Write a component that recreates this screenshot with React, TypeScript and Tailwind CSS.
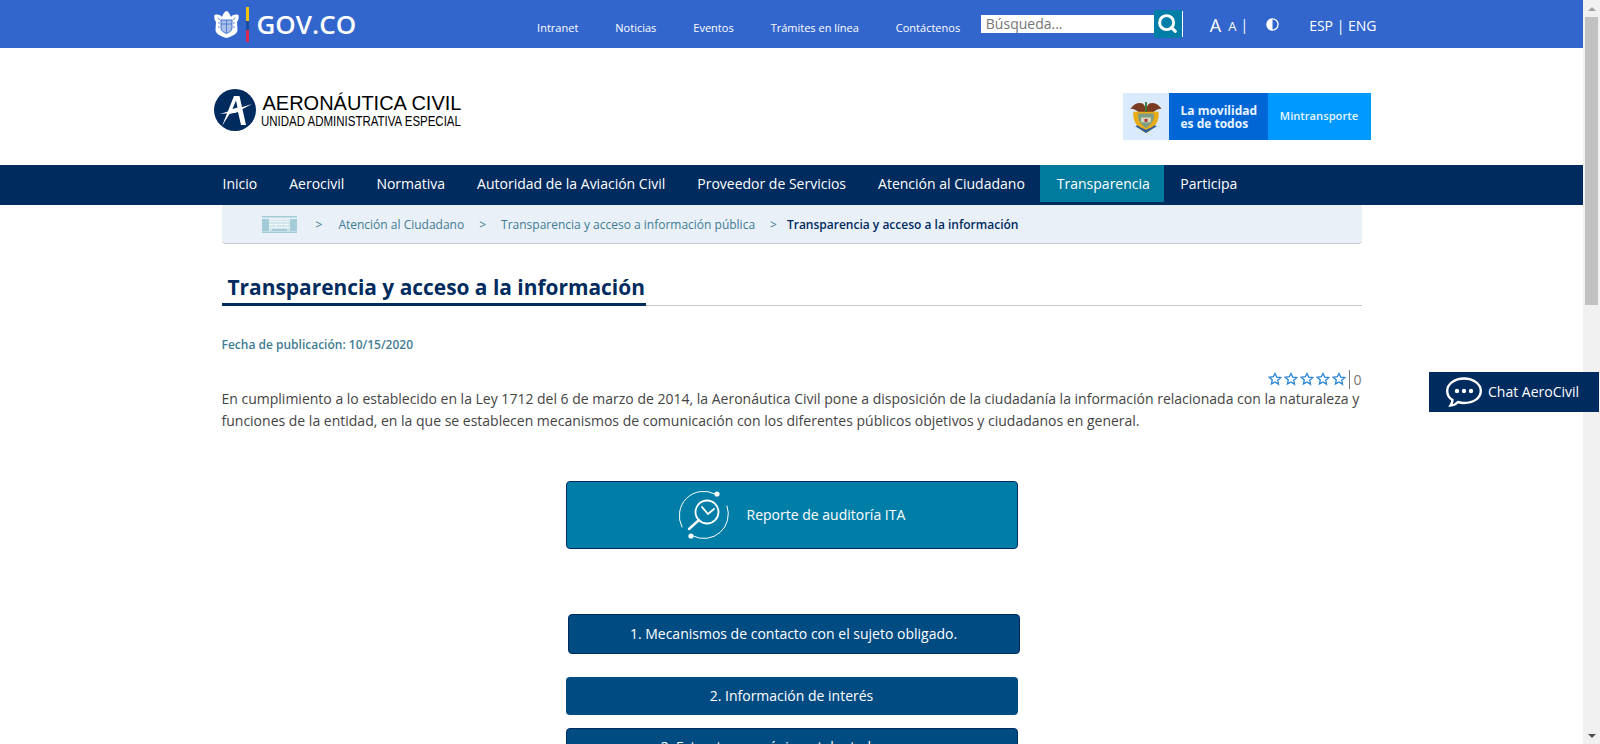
import { Search } from "lucide-react";

const topLinks = ["Intranet", "Noticias", "Eventos", "Trámites en línea", "Contáctenos"];
const navLinks = [
  "Inicio",
  "Aerocivil",
  "Normativa",
  "Autoridad de la Aviación Civil",
  "Proveedor de Servicios",
  "Atención al Ciudadano",
  "Transparencia",
  "Participa",
];

function GovShield({ className }: { className?: string }) {
  return (
    <svg viewBox="0 0 25 28" className={className}>
      <path d="M0.5 5C3 4 6 4.500 8 7c1-3 3-6 4.500-6S16 4 17 7c2-2.500 5-3 7.500-2 .5 3 0 5-1.500 7l.5 8c0 4-6 6.500-11 8C7.500 26.500 1.500 24 1.500 20L2 12C.5 10 0 8 .5 5z" fill="#fff" />
      <path d="M7 10h11v8c0 3-3 4.500-5.500 5.500C10 22.500 7 21 7 18z" fill="#a9bfe8" />
      <path d="M7 10h11v8c0 3-3 4.500-5.500 5.500C10 22.500 7 21 7 18z" fill="none" stroke="#3366cc" strokeWidth="0.9" />
      <path d="M12.500 10v13M7 14h11M3.500 8l3 2M21.500 8l-3 2M4 13l2 0M21 13l-2 0M4 17h2M21 17h-2" stroke="#3366cc" strokeWidth="0.7" fill="none" />
    </svg>
  );
}

function AeroLogo({ className }: { className?: string }) {
  return (
    <svg viewBox="0 0 42 42" className={className}>
      <circle cx="21" cy="21" r="21" fill="#002b5e" />
      <path d="M8 37 L20 7 h5.500 L32 36 h-5 L24 23 L15.500 25 Z M18.500 20 L23.500 18.500 L22 11.500 Z" fill="#fff" fillRule="evenodd" />
      <path d="M6 25 L38 15 L22 23.500 Z" fill="#fff" />
    </svg>
  );
}

function ColombiaShield({ className }: { className?: string }) {
  return (
    <svg viewBox="0 0 32 36" className={className}>
      <path d="M0 10c4-6 10-7 13-5l3 4 3-4c3-2 9-1 13 5-4 0-7 2-9 4H9C7 12 4 10 0 10z" fill="#7a3b22" />
      <path d="M3 13h26c1 8-3 17-13 22C6 30 2 21 3 13z" fill="#e8ac17" />
      <path d="M8 15h16c1 6-2 11-8 15-6-4-9-9-8-15z" fill="#7f9c84" />
      <path d="M11 19h10v5h-10z" fill="#d5d8b8" />
      <path d="M14.500 20.500h3v3h-3z" fill="#b42b39" />
      <path d="M15 3h2v10h-2z" fill="#3c7a3a" />
      <path d="M5 28c3 2 7 4 11 7 4-3 8-5 11-7l-2-1c-2 2-6 3-9 5-3-2-7-3-9-5z" fill="#2b5aa0" />
    </svg>
  );
}

function BuildingIcon({ className }: { className?: string }) {
  return (
    <svg viewBox="0 0 35 17" className={className}>
      <path d="M0 0h35v1.500H0zM0 15.500h35V17H0z" fill="#a4cbd8" />
      <path d="M0 3h7v12H0zM28 3h7v12h-7z" fill="#a4cbd8" />
      <path d="M7 4h21v11H7z" fill="#d3e6ec" />
      <path d="M7 5.500h21M7 8.500h21M7 11.500h21" stroke="#f2f7f9" strokeWidth="1.200" strokeDasharray="4 1" />
      <path d="M10 13h15v2H10z" fill="#a4cbd8" />
    </svg>
  );
}

function AuditIcon({ className }: { className?: string }) {
  return (
    <svg viewBox="0 0 52 52" className={className} fill="none" stroke="#fff" strokeLinecap="round">
      <path d="M37 5A24.500 24.500 0 0 0 4 38" strokeWidth="1" />
      <path d="M15 47A24.500 24.500 0 0 0 49 17" strokeWidth="1" />
      <circle cx="39" cy="5" r="2.600" fill="#fff" stroke="none" />
      <circle cx="13" cy="47" r="2.600" fill="#fff" stroke="none" />
      <circle cx="29" cy="23" r="11.500" strokeWidth="1.800" />
      <path d="M21 31 L11 40" strokeWidth="2.400" />
      <path d="M24 18 L30 25 L36 20" strokeWidth="1.800" />
    </svg>
  );
}

function Star() {
  return (
    <svg viewBox="0 0 24 24" className="h-[14px] w-[14px]" fill="none" stroke="#2a84d2" strokeWidth="2.200">
      <path d="M12 2.500l2.900 6.300 6.900.8-5.100 4.700 1.400 6.800L12 17l-6.100 3.400 1.400-6.800-5.100-4.700 6.900-.8z" />
    </svg>
  );
}

function ChatIcon({ className }: { className?: string }) {
  return (
    <svg viewBox="0 0 36 30" className={className}>
      <path
        d="M18 1.500C8.500 1.500 1.200 7 1.200 14c0 4 2 7 5.300 9 0 2-1 4-2 5.500 3 0 5.500-1.500 7.500-3.500 2 .6 4 1 6 1 9.500 0 16.800-5 16.800-12S27.500 1.500 18 1.500z"
        fill="none"
        stroke="#fff"
        strokeWidth="2.400"
      />
      <circle cx="11" cy="14" r="2.200" fill="#fff" />
      <circle cx="18" cy="14" r="2.200" fill="#fff" />
      <circle cx="25" cy="14" r="2.200" fill="#fff" />
    </svg>
  );
}

function Scrollbar() {
  return (
    <div className="flex w-[17px] shrink-0 flex-col items-center bg-[#f1f1f1]">
      <div className="flex h-[17px] w-full items-center justify-center">
        <div className="h-0 w-0 border-x-[4px] border-b-[4px] border-x-transparent border-b-[#a3a3a3]" />
      </div>
      <div className="h-[288px] w-[13px] bg-[#c1c1c1]" />
      <div className="flex-1" />
      <div className="flex h-[17px] w-full items-center justify-center">
        <div className="h-0 w-0 border-x-[4px] border-t-[4px] border-x-transparent border-t-[#505050]" />
      </div>
    </div>
  );
}

export default function App() {
  return (
    <div className="relative flex h-[744px] w-full overflow-hidden bg-white font-['Open_Sans',sans-serif] text-[#444]">
      <div className="min-w-0 flex-1 overflow-hidden">
        <header className="flex h-12 justify-center bg-[#3366cc] text-white">
          <div className="flex w-[1166px] items-center whitespace-nowrap">
            <div className="ml-[5px] flex items-center">
              <GovShield className="h-[28px] w-[25px]" />
              <div className="ml-[7px] flex h-[35px] w-[3px] flex-col">
                <div className="flex-[5] bg-[#f4c20d]" />
                <div className="flex-[3] bg-[#1b4f9c]" />
                <div className="flex-[4] bg-[#d9284d]" />
              </div>
              <span className="ml-[8px] text-[26px] font-semibold leading-none">GOV.CO</span>
            </div>
            <nav className="ml-[181px] flex gap-[37px] pt-2 text-[11px]">
              {topLinks.map((l) => (
                <a key={l}>{l}</a>
              ))}
            </nav>
            <div className="ml-auto flex items-center">
              <div className="h-[18px] w-[173px] bg-white pl-[5px] text-sm leading-[18px] text-[#757575]">Búsqueda...</div>
              <div className="flex h-7 w-7 items-center justify-center bg-[#007ea8]">
                <Search className="mb-[2px] h-[21px] w-[21px]" strokeWidth={3.4} />
              </div>
              <div className="h-[26px] w-px bg-white" />
            </div>
            <div className="-mr-[2px] ml-[27px] flex items-center pt-px">
              <span className="text-[18px] leading-none">A</span>
              <span className="ml-[7px] mt-[3px] text-[13px] leading-none">A</span>
              <span className="ml-[4px] mt-[1px] text-sm leading-none">|</span>
              <svg viewBox="0 0 14 14" className="ml-[18px] h-[13px] w-[13px]">
                <circle cx="7" cy="7" r="6" fill="none" stroke="#fff" strokeWidth="1.400" />
                <path d="M7 1a6 6 0 0 1 0 12z" fill="#fff" transform="rotate(180 7 7)" />
              </svg>
              <span className="ml-[30px] mt-[2px] text-sm">ESP | ENG</span>
            </div>
          </div>
        </header>

        <div className="flex h-[117px] justify-center">
          <div className="flex w-[1166px] items-start">
            <div className="ml-[5px] mt-[41px] flex items-center">
              <AeroLogo className="h-[42px] w-[42px]" />
              <div className="-mt-[2px] ml-[7px] font-['Liberation_Sans',sans-serif] text-black">
                <div className="text-[20px] leading-[23px]">AERONÁUTICA CIVIL</div>
                <div className="-ml-[2px] origin-left scale-x-[0.82] whitespace-nowrap text-[14px] leading-[12px]">UNIDAD ADMINISTRATIVA ESPECIAL</div>
              </div>
            </div>
            <div className="ml-auto mr-[4px] mt-[45px] flex h-[47px] w-[248px] text-[11.2px] font-semibold text-[#e8f4ff]">
              <div className="flex w-[46px] items-center justify-center bg-[#d9eafc]">
                <ColombiaShield className="h-[35px] w-[32px]" />
              </div>
              <div className="flex w-[99px] items-center bg-[#0066d6] pl-[12px] text-xs font-bold leading-[13px]">
                La movilidad
                <br />
                es de todos
              </div>
              <div className="flex flex-1 items-center justify-center bg-[#0099ff]">Mintransporte</div>
            </div>
          </div>
        </div>

        <nav className="flex h-10 justify-center bg-[#002b5e] text-sm text-white">
          <div className="flex w-[1166px] -translate-x-[2px]">
            {navLinks.map((l) => (
              <a
                key={l}
                className={
                  l === "Transparencia"
                    ? "-ml-px mb-[3px] flex items-center bg-[#007b9e] pl-[17px] pr-[14.5px]"
                    : "flex items-center px-4 pb-[2px]"
                }
              >
                {l}
              </a>
            ))}
          </div>
        </nav>

        <main className="mx-auto w-[1140px]">
          <div className="flex h-[39px] items-center rounded-b-[4px] border-b border-[#c9cdd2] bg-[#e9f0f8] pl-[40px] pt-px text-xs text-[#3f7c92]">
            <BuildingIcon className="h-[17px] w-[35px]" />
            <span className="ml-[19px]">&gt;</span>
            <span className="ml-[16px]">Atención al Ciudadano</span>
            <span className="ml-[15px]">&gt;</span>
            <span className="ml-[15px]">Transparencia y acceso a información pública</span>
            <span className="ml-[15px]">&gt;</span>
            <span className="ml-[10px] font-semibold text-[#002b5e]">Transparencia y acceso a la información</span>
          </div>

          <div className="mt-[29px] flex border-b border-[#c8c8c8]">
            <h1 className="-mb-px border-b-[3px] border-[#002b5e] pb-[2px] pl-[6px] pr-px text-[20.9px] font-bold leading-[28px] text-[#002b5e]">
              Transparencia y acceso a la información
            </h1>
          </div>

          <p className="mt-[31px] text-xs font-semibold leading-4 text-[#3f7c92]">Fecha de publicación: 10/15/2020</p>

          <div className="mt-[16px] flex h-5 items-center justify-end gap-[3px]">
            <div className="flex gap-[2px]">
              <Star />
              <Star />
              <Star />
              <Star />
              <Star />
            </div>
            <span className="border-l border-[#777] pl-[3px] text-sm leading-[19px] text-[#777]">0</span>
          </div>

          <p className="-mt-px text-sm leading-[22px] text-[#444]">
            En cumplimiento a lo establecido en la Ley 1712 del 6 de marzo de 2014, la Aeronáutica Civil pone a disposición de la ciudadanía la información relacionada con la naturaleza y funciones de la entidad, en la que se establecen mecanismos de comunicación con los diferentes públicos objetivos y ciudadanos en general.
          </p>

          <div className="ml-[344px] mt-[49px] flex h-[68px] w-[452px] items-center rounded-[4px] border border-[#002b5e] bg-[#007ea8] pl-[111px] text-sm text-white">
            <AuditIcon className="h-[52px] w-[52px]" />
            <span className="ml-[17px]">Reporte de auditoría ITA</span>
          </div>

          <div className="ml-[346px] mt-[65px] flex h-10 w-[452px] items-center justify-center rounded-[4px] border border-[#002b5e] bg-[#004b82] text-sm text-white">
            1. Mecanismos de contacto con el sujeto obligado.
          </div>
          <div className="ml-[344px] mt-[23px] flex h-[38px] w-[452px] items-center justify-center rounded-[4px] bg-[#004b82] text-sm text-white">
            2. Información de interés
          </div>
          <div className="ml-[344px] mt-[13px] flex h-[38px] w-[452px] items-center justify-center rounded-[4px] border border-[#002b5e] bg-[#004b82] text-sm text-white">
            3. Estructura orgánica y talento humano
          </div>
        </main>
      </div>
      <Scrollbar />

      <a className="absolute right-px top-[372px] flex h-10 w-[170px] items-center bg-[#002b5e] pl-[17px] text-sm text-white">
        <ChatIcon className="h-[30px] w-[36px]" />
        <span className="ml-[6px]">Chat AeroCivil</span>
      </a>
    </div>
  );
}
